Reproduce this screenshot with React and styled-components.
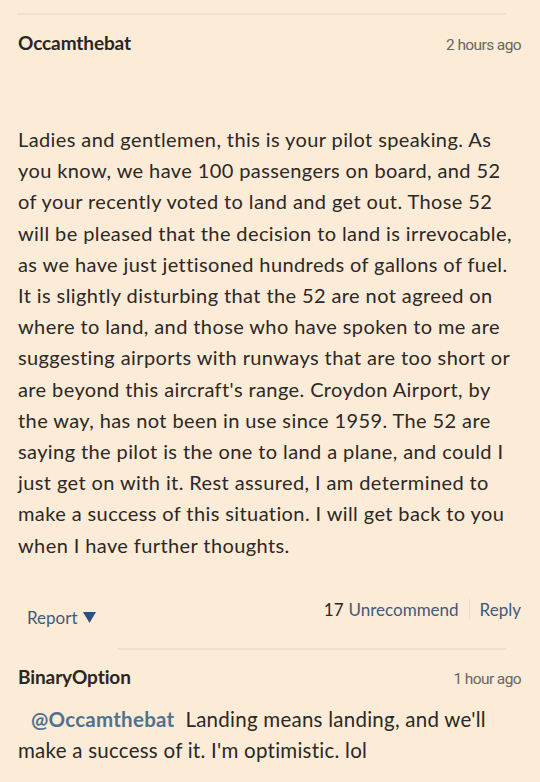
import React from "react";
import styled, { createGlobalStyle } from "styled-components";

const Global = createGlobalStyle`
  html, body {
    margin: 0;
    padding: 0;
    background: #fcebd6;
  }
  body {
    font-family: Lato, "Open Sans", sans-serif;
    color: #2b2826;
  }
`;

const Page = styled.div`
  width: 540px;
  height: 782px;
  overflow: hidden;
  background: #fcebd6;
  padding-top: 13px;
  box-sizing: border-box;
`;

const Rule = styled.div`
  height: 2px;
  background: #f0dfcb;
  margin: 0 34px 0 ${(p) => p.$left}px;
`;

const Comment = styled.div`
  padding: 0 19px 0 18px;
`;

const Header = styled.div`
  display: flex;
  justify-content: space-between;
  align-items: baseline;
  padding-top: ${(p) => p.$top}px;
`;

const Author = styled.h3`
  margin: 0;
  font-size: 19px;
  font-weight: 700;
  color: #2a2624;
  letter-spacing: -0.1px;
`;

const Time = styled.span`
  font-family: Roboto, sans-serif;
  font-size: 15.5px;
  color: #6b6560;
  letter-spacing: -0.6px;
`;

const Body = styled.div`
  margin-top: ${(p) => p.$top}px;
  font-size: ${(p) => p.$size}px;
  line-height: 31.2px;
  color: #2b2826;
  letter-spacing: ${(p) => p.$track}px;
`;

const Line = styled.div`
  white-space: nowrap;
`;

const Mention = styled.span`
  color: #4f7290;
  font-weight: 700;
  margin: 0 11px 0 13px;
`;

const Footer = styled.div`
  display: flex;
  justify-content: space-between;
  align-items: flex-start;
  margin-top: 38px;
  padding: 0 0 20px 9px;
`;

const Report = styled.span`
  display: flex;
  align-items: center;
  gap: 5px;
  margin-top: 8px;
  font-size: 17px;
  color: #3f5a7c;
`;

const Actions = styled.div`
  display: flex;
  align-items: center;
  font-size: 17px;
`;

const Count = styled.span`
  color: #2a2624;
  margin-right: 5px;
`;

const Link = styled.span`
  color: #3f5a7c;
`;

const Sep = styled.span`
  width: 1px;
  height: 20px;
  background: #ecdac6;
  margin: 0 10px;
`;

const pilotLines = [
  "Ladies and gentlemen, this is your pilot speaking. As",
  "you know, we have 100 passengers on board, and 52",
  "of your recently voted to land and get out. Those 52",
  "will be pleased that the decision to land is irrevocable,",
  "as we have just jettisoned hundreds of gallons of fuel.",
  "It is slightly disturbing that the 52 are not agreed on",
  "where to land, and those who have spoken to me are",
  "suggesting airports with runways that are too short or",
  "are beyond this aircraft's range. Croydon Airport, by",
  "the way, has not been in use since 1959. The 52 are",
  "saying the pilot is the one to land a plane, and could I",
  "just get on with it. Rest assured, I am determined to",
  "make a success of this situation. I will get back to you",
  "when I have further thoughts.",
];

export default function App() {
  return (
    <Page>
      <Global />
      <Rule $left={17} />
      <Comment>
        <Header $top={16}>
          <Author>Occamthebat</Author>
          <Time>2 hours ago</Time>
        </Header>
        <Body $top={70} $size={20} $track={0.4}>
          {pilotLines.map((l, i) => (
            <Line key={i}>{l}</Line>
          ))}
        </Body>
        <Footer>
          <Report>
            Report
            <svg width="13" height="11" viewBox="0 0 13 11">
              <path d="M0 0 H13 L6.5 11 Z" fill="#2f4f80" />
            </svg>
          </Report>
          <Actions>
            <Count>17</Count>
            <Link>Unrecommend</Link>
            <Sep />
            <Link>Reply</Link>
          </Actions>
        </Footer>
      </Comment>
      <Rule $left={117} />
      <Comment>
        <Header $top={15}>
          <Author>BinaryOption</Author>
          <Time>1 hour ago</Time>
        </Header>
        <Body $top={16} $size={20.5} $track={0.25}>
          <Line>
            <Mention>@Occamthebat</Mention>Landing means landing, and we'll
          </Line>
          <Line>make a success of it. I'm optimistic. lol</Line>
        </Body>
      </Comment>
    </Page>
  );
}
